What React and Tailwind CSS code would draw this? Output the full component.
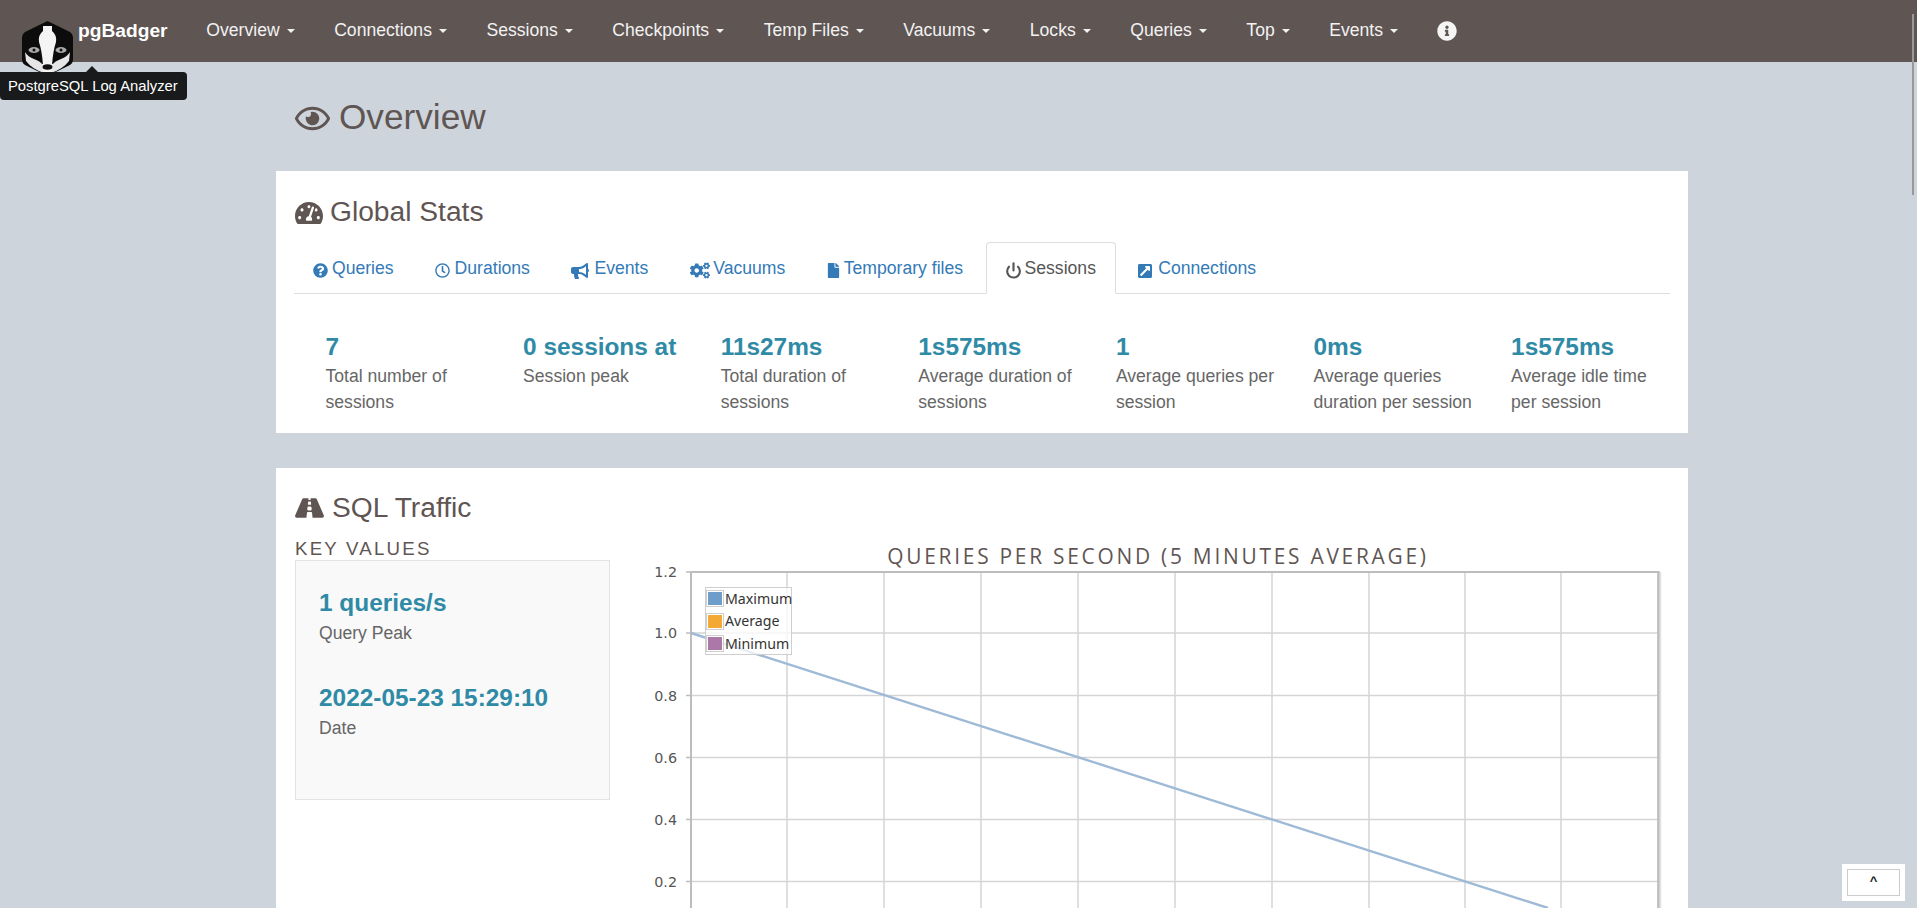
import React from "react";
import {
  FaBullhorn,
  FaCogs,
  FaRegEye,
  FaExternalLinkSquareAlt,
  FaFile,
  FaInfoCircle,
  FaQuestionCircle,
  FaRegClock,
  FaRoad,
  FaTachometerAlt,
} from "react-icons/fa";
import { Power } from "lucide-react";

const navItems = [
  "Overview",
  "Connections",
  "Sessions",
  "Checkpoints",
  "Temp Files",
  "Vacuums",
  "Locks",
  "Queries",
  "Top",
  "Events",
];

const tabs = [
  { label: "Queries", box: "w-[19.5px]", icon: <FaQuestionCircle className="w-[15px] h-[15px]" /> },
  { label: "Durations", box: "w-[19.5px]", icon: <FaRegClock className="w-[15px] h-[15px]" /> },
  { label: "Events", box: "w-[23px]", icon: <FaBullhorn className="w-[18px] h-[16px]" /> },
  { label: "Vacuums", box: "w-[23.5px]", icon: <FaCogs className="w-[20px] h-[17px]" /> },
  { label: "Temporary files", box: "w-[17px]", icon: <FaFile className="w-[13px] h-[15px]" /> },
  {
    label: "Sessions",
    active: true,
    box: "w-[20px]",
    icon: <Power className="w-[17px] h-[17px]" strokeWidth={3} />,
  },
  { label: "Connections", box: "w-[20.8px]", icon: <FaExternalLinkSquareAlt className="w-[16px] h-[16px]" /> },
];

const stats = [
  ["7", "Total number of sessions"],
  ["0 sessions at", "Session peak"],
  ["11s27ms", "Total duration of sessions"],
  ["1s575ms", "Average duration of sessions"],
  ["1", "Average queries per session"],
  ["0ms", "Average queries duration per session"],
  ["1s575ms", "Average idle time per session"],
];

const gridX = [51, 147, 244, 341, 438, 535, 632, 729, 825, 921, 1018];
const gridY = [65, 127.5, 189.5, 251.5, 313.5];
const ticks = [
  ["1.2", 4],
  ["1.0", 65],
  ["0.8", 127.5],
  ["0.6", 189.5],
  ["0.4", 251.5],
  ["0.2", 313.5],
];

const legend = [
  ["Maximum", "bg-[#6e9dc9]"],
  ["Average", "bg-[#f5a935]"],
  ["Minimum", "bg-[#ab78a8]"],
];

function Logo() {
  return (
    <svg className="absolute left-[22px] top-[21px] w-[51px] h-[55px]" viewBox="0 0 51 55">
      <path d="M25.5 0 L48 11 Q51 13 51 16 L51 39 Q51 42 48 44 L25.5 55 L3 44 Q0 42 0 39 L0 16 Q0 13 3 11 Z" fill="#0c0c0c" />
      <path d="M21 5 L30 5 L30 10 Q35 14 34 21 Q31 30 30 44 L21 44 Q20 30 17 21 Q16 14 21 10 Z" fill="#f4f4f4" />
      <path d="M3 31 Q6 36 12 38 Q18 40 21 44 L22 52 Q10 48 4 40 Z" fill="#e6e6e6" />
      <path d="M48 31 Q45 36 39 38 Q33 40 30 44 L29 52 Q41 48 47 40 Z" fill="#e6e6e6" />
      <path d="M20 43 L31 43 L30 52 L21 52 Z" fill="#f4f4f4" />
      <ellipse cx="25.5" cy="46" rx="5" ry="2.8" fill="#111" />
      <ellipse cx="12" cy="29" rx="5.5" ry="3" fill="#a8a8a8" />
      <ellipse cx="39" cy="29" rx="5.5" ry="3" fill="#a8a8a8" />
      <circle cx="12" cy="29" r="1.5" fill="#111" />
      <circle cx="39" cy="29" r="1.5" fill="#111" />
    </svg>
  );
}

function Navbar() {
  return (
    <nav className="h-[62px] bg-[#5f5553] flex items-center pl-[78px] text-white text-[17.6px]">
      <span className="font-bold text-[19.2px] mr-[19px]">pgBadger</span>
      {navItems.map((item) => (
        <span key={item} className="flex items-center px-[19.75px] text-[#f2f2f2]">
          {item}
          <span className="ml-[7px] w-0 h-0 border-x-[4.4px] border-x-transparent border-t-[4.4px] border-t-[#f2f2f2]" />
        </span>
      ))}
      <FaInfoCircle className="ml-[19px] w-[20px] h-[20px] text-[#f5f5f5]" />
    </nav>
  );
}

function Chart() {
  return (
    <div className="relative w-[1036px] shrink-0 ml-[30px]">
      <div className="h-[30px] pt-[5px] text-center text-[20.9px] leading-[26px] tracking-[2.75px] text-[#5f5553] font-['Open_Sans',sans-serif]">
        QUERIES PER SECOND (5 MINUTES AVERAGE)
      </div>
      <svg width="1036" height="400" className="block overflow-visible">
        {gridX.map((x) => (
          <line key={x} x1={x} x2={x} y1="4" y2="400" stroke="#d5d5d5" strokeWidth="1.5" />
        ))}
        {gridY.map((y) => (
          <line key={y} x1="51" x2="1018" y1={y} y2={y} stroke="#d5d5d5" strokeWidth="1.5" />
        ))}
        <line x1="51" x2="1019" y1="4" y2="4" stroke="#bdbdbd" strokeWidth="2" />
        <line x1="51" x2="51" y1="3" y2="400" stroke="#bdbdbd" strokeWidth="2" />
        <line x1="1018.5" x2="1018.5" y1="3" y2="400" stroke="#bdbdbd" strokeWidth="2.5" />
        <line x1="1020.5" x2="1020.5" y1="4" y2="400" stroke="#e2e2e2" strokeWidth="1.5" />
        {ticks.map(([label, y]) => (
          <g key={label}>
            <line x1="46" x2="50" y1={y} y2={y} stroke="#bdbdbd" strokeWidth="1.5" />
            <text
              x="37"
              y={y + 5}
              textAnchor="end"
              fontSize="14.3"
              fill="#555"
              fontFamily="'DejaVu Sans', sans-serif"
            >
              {label}
            </text>
          </g>
        ))}
        <line x1="51" y1="65" x2="908" y2="340" stroke="#9fbad6" strokeWidth="2.4" />
      </svg>
      <div className="absolute left-[65px] top-[49px] w-[87px] h-[68px] border border-[#cfcfcf] bg-white/75 font-['Noto_Sans',sans-serif] text-[14.2px] leading-[22px] text-[#333]">
        {legend.map(([name, color]) => (
          <div key={name} className="flex items-center h-[22.5px]">
            <span className="border border-[#cfcfcf] p-[1px] mr-px">
              <span className={`block w-[14px] h-[13px] ${color}`} />
            </span>
            {name}
          </div>
        ))}
      </div>
    </div>
  );
}

export default function App() {
  return (
    <div className="relative h-[908px] overflow-hidden bg-[#cdd4db] font-['Liberation_Sans',Arial,sans-serif] text-[17.6px] leading-[25.14px] text-[#666]">
      <Navbar />
      <Logo />

      <div className="absolute left-[86px] top-[66px] w-0 h-0 border-x-[6px] border-x-transparent border-b-[6px] border-b-[#181a1b]" />
      <div className="absolute left-0 top-[72px] h-[28px] w-[187px] rounded-r-[4px] rounded-bl-[4px] bg-[#181a1b] pl-[8px] text-[14.8px] leading-[28px] text-white">
        PostgreSQL Log Analyzer
      </div>

      <main className="w-[1412px] ml-[276px]">
        <h1 className="h-[109px] flex items-center pl-[19px] text-[35.2px] text-[#5f5553]">
          <FaRegEye className="w-[35px] h-[35px] mr-[9px] mt-[3px]" />
          Overview
        </h1>

        <section className="bg-white px-[18px] pb-[18px]">
          <h2 className="h-[71px] pt-[10px] flex items-center pl-px text-[28.2px] text-[#5f5553]">
            <FaTachometerAlt className="w-[28px] h-[26px] mr-[7px] mt-[3px]" />
            Global Stats
          </h2>
          <ul className="flex border-b border-[#ddd]">
            {tabs.map((tab) => (
              <li
                key={tab.label}
                className={`flex items-center h-[52px] pt-[2px] -mb-px mr-[3px] pl-[17.5px] pr-[19px] border rounded-t-[4px] ${
                  tab.active
                    ? "border-[#ddd] border-b-white bg-white text-[#555]"
                    : "border-transparent text-[#337ab7]"
                }`}
              >
                <span className={`shrink-0 mt-[3px] ${tab.box}`}>{tab.icon}</span>
                {tab.label}
              </li>
            ))}
          </ul>
          <div className="flex pl-[31.5px] pt-[40px]">
            {stats.map(([value, label], i) => (
              <div key={i} className="w-[197.6px] shrink-0 pr-[36px]">
                <div className="text-[24.4px] leading-[26.4px] font-bold text-[#2f8aa6] whitespace-nowrap">
                  {value}
                </div>
                <div className="mt-[4px]">{label}</div>
              </div>
            ))}
          </div>
        </section>

        <section className="mt-[35px] bg-white px-[18px]">
          <h2 className="h-[70px] pt-[10px] flex items-center pl-px text-[28.2px] text-[#5f5553]">
            <FaRoad className="w-[29px] h-[26px] mr-[8px]" />
            SQL Traffic
          </h2>
          <div className="flex">
            <div className="w-[316px] shrink-0 pl-px">
              <h3 className="h-[22px] text-[18.7px] leading-[22px] tracking-[2.2px] text-[#5f5553]">
                KEY VALUES
              </h3>
              <div className="h-[240px] border border-[#e3e3e3] bg-[#f9f9f9] pl-[23px] pt-[29px]">
                <div className="text-[24.4px] leading-[26.4px] font-bold text-[#2f8aa6]">1 queries/s</div>
                <div className="mt-[5px]">Query Peak</div>
                <div className="mt-[39px] text-[24.4px] leading-[26.4px] font-bold text-[#2f8aa6]">
                  2022-05-23 15:29:10
                </div>
                <div className="mt-[4px]">Date</div>
              </div>
            </div>
            <Chart />
          </div>
        </section>
      </main>

      <div className="absolute right-[3px] top-[14px] w-[2px] h-[181px] bg-[#999]" />

      <div className="absolute left-[1842px] top-[864px] w-[63px] h-[37px] bg-white p-[5px]">
        <div className="h-full border border-[#ccc] text-center text-[13px] leading-[22px] font-bold text-[#222]">
          ^
        </div>
      </div>
    </div>
  );
}
